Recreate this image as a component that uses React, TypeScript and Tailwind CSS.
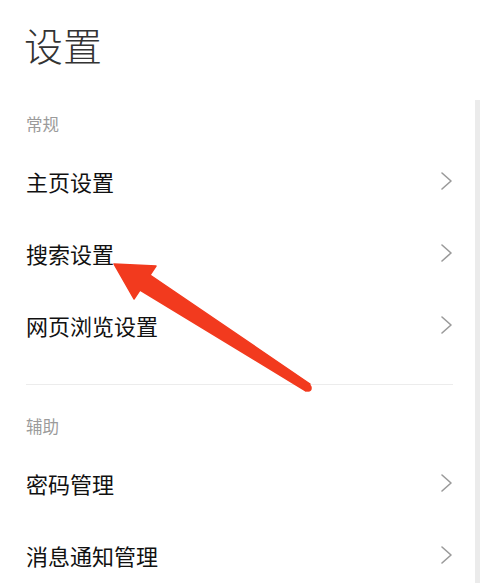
import React from "react";

const font = { fontFamily: '"Noto Sans CJK SC", "Noto Sans", sans-serif' };

function Chevron() {
  return (
    <svg width="13" height="20" viewBox="0 0 13 20" className="shrink-0">
      <polyline points="2,2 11,10 2,18" fill="none" stroke="#9a9a9a" strokeWidth="1.6" strokeLinejoin="round" strokeLinecap="round" />
    </svg>
  );
}

function Row({ label }: { label: string }) {
  return (
    <div className="flex items-center justify-between h-[72px] pl-[26px] pr-[27px]">
      <span className="text-[22px] leading-none text-[#111111]">{label}</span>
      <Chevron />
    </div>
  );
}

function Section({ label }: { label: string }) {
  return <div className="pl-[26px] h-6 flex items-center text-[16.5px] text-[#9b9b9b]">{label}</div>;
}

export default function App() {
  return (
    <div className="relative w-[480px] h-[583px] overflow-hidden bg-white" style={font}>
      <div className="pt-[24px] pl-[24px] h-[65px]">
        <div className="text-[39px] leading-[40px] font-light text-[#333333]">设置</div>
      </div>
      <div className="mt-[47px]">
        <Section label="常规" />
      </div>
      <div className="mt-[9px]">
        <Row label="主页设置" />
        <Row label="搜索设置" />
        <Row label="网页浏览设置" />
      </div>
      <div className="mt-[23px] ml-[26px] w-[427px] h-px bg-[#ececec]" />
      <div className="mt-[29px]">
        <Section label="辅助" />
      </div>
      <div className="mt-[9px]">
        <Row label="密码管理" />
        <Row label="消息通知管理" />
      </div>

      <div className="absolute right-0 top-[100px] bottom-0 w-[5px] bg-[#ebebeb]" />

      <svg className="absolute left-0 top-0 pointer-events-none" width="480" height="583" viewBox="0 0 480 583">
        <polygon
          points="114,264 156,266 150,275 310,384 306,391 140,290 134,299"
          fill="#f23a1e"
          stroke="#f23a1e"
          strokeWidth="1.5"
          strokeLinejoin="round"
        />
        <circle cx="308" cy="388" r="3.8" fill="#f23a1e" />
      </svg>
    </div>
  );
}
